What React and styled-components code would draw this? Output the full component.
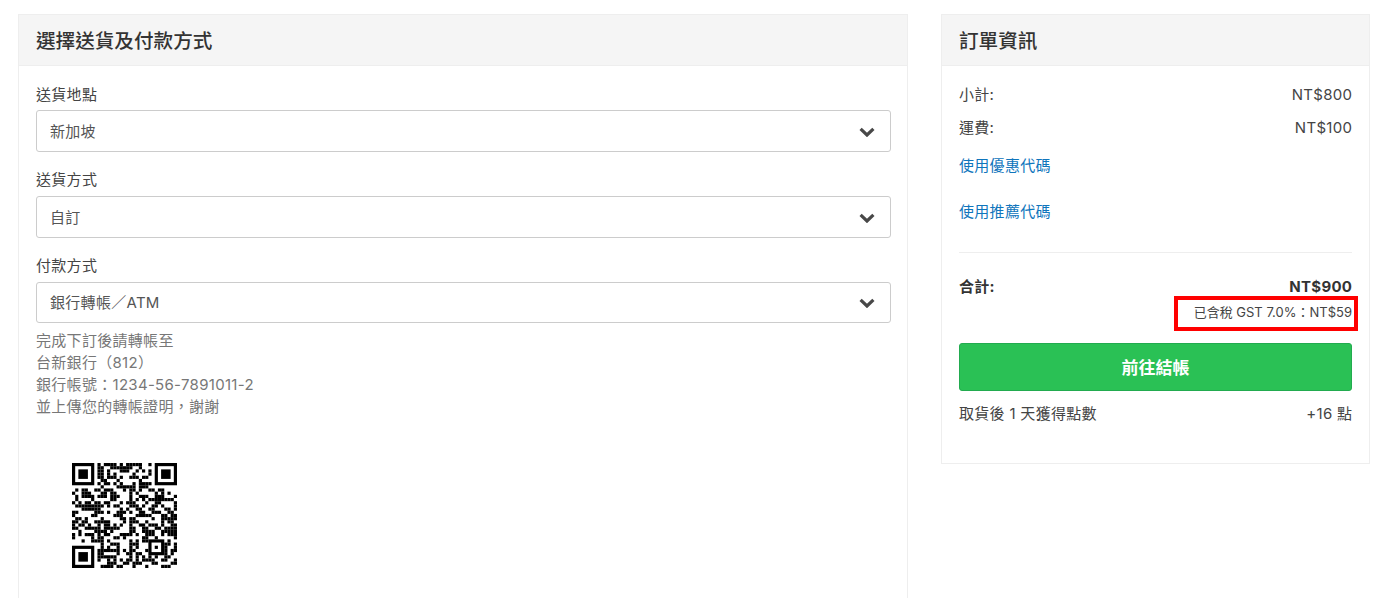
import styled, { createGlobalStyle } from "styled-components";

const GlobalStyle = createGlobalStyle`
  html, body {
    margin: 0;
    background: #fff;
    overflow: hidden;
  }
  body {
    font-family: Inter, "Noto Sans CJK TC", sans-serif;
    color: #333;
  }
`;

// quick module map for the transfer qr code
const qrSize = 33;
const qrCells = () => {
  const cells = [];
  let seed = 20231;
  for (let y = 0; y < qrSize; y++) {
    for (let x = 0; x < qrSize; x++) {
      seed = (seed * 16807) % 2147483647;
      const nearFinder =
        (x < 8 && y < 8) || (x >= qrSize - 8 && y < 8) || (x < 8 && y >= qrSize - 8);
      const inAlign = x >= 24 && x < 29 && y >= 24 && y < 29;
      if (!nearFinder && !inAlign && seed % 100 < 52) cells.push([x, y]);
    }
  }
  return cells;
};

const Finder = ({ x, y }) => (
  <>
    <rect x={x} y={y} width="7" height="7" fill="#000" />
    <rect x={x + 1} y={y + 1} width="5" height="5" fill="#fff" />
    <rect x={x + 2} y={y + 2} width="3" height="3" fill="#000" />
  </>
);

const Chevron = () => (
  <svg viewBox="0 0 16 10" width="16" height="10" fill="none">
    <path d="M1.6 1.8 L8 8 L14.4 1.8" stroke="#484848" strokeWidth="3.2" />
  </svg>
);

const App = () => {
  return (
    <>
      <GlobalStyle />
      <Page>
        <MainCard>
          <CardHeader>選擇送貨及付款方式</CardHeader>
          <MainBody>
            <Field>
              <Label>送貨地點</Label>
              <SelectBox>新加坡<Chevron /></SelectBox>
            </Field>
            <Field>
              <Label>送貨方式</Label>
              <SelectBox>自訂<Chevron /></SelectBox>
            </Field>
            <Field>
              <Label>付款方式</Label>
              <SelectBox $height={41}>銀行轉帳／ATM<Chevron /></SelectBox>
            </Field>
            <HelpText>
              完成下訂後請轉帳至<br />
              台新銀行（812）<br />
              銀行帳號：1234-56-7891011-2<br />
              並上傳您的轉帳證明，謝謝
            </HelpText>
            <QrCode viewBox={`0 0 ${qrSize} ${qrSize}`}>
              <Finder x={0} y={0} />
              <Finder x={qrSize - 7} y={0} />
              <Finder x={0} y={qrSize - 7} />
              <rect x="24" y="24" width="5" height="5" fill="#000" />
              <rect x="25" y="25" width="3" height="3" fill="#fff" />
              <rect x="26" y="26" width="1" height="1" fill="#000" />
              {qrCells().map(([x, y]) => (
                <rect key={`${x}-${y}`} x={x} y={y} width="1" height="1" fill="#000" />
              ))}
            </QrCode>
          </MainBody>
        </MainCard>
        <SideCard>
          <CardHeader>訂單資訊</CardHeader>
          <SideBody>
            <Row><span>小計:</span><span>NT$800</span></Row>
            <Row><span>運費:</span><span>NT$100</span></Row>
            <CouponLink>使用優惠代碼</CouponLink>
            <CouponLink>使用推薦代碼</CouponLink>
            <Divider />
            <TotalRow><span>合計:</span><span>NT$900</span></TotalRow>
            <TaxLine><TaxNote>已含稅 GST 7.0%：NT$59</TaxNote></TaxLine>
            <CheckoutButton>前往結帳</CheckoutButton>
            <PointsRow><span>取貨後 1 天獲得點數</span><span>+16 點</span></PointsRow>
          </SideBody>
        </SideCard>
      </Page>
    </>
  );
};

export default App;

const Page = styled.div`
  display: flex;
  align-items: flex-start;
  gap: 33px;
  padding: 14px 18px 0;
  height: 598px;
  box-sizing: border-box;
  overflow: hidden;
`;

const Card = styled.section`
  border: 1px solid #eee;
  box-sizing: border-box;
  background: #fff;
`;

const MainCard = styled(Card)`
  width: 890px;
  flex: none;
  height: 700px;
`;

const SideCard = styled(Card)`
  width: 429px;
  flex: none;
  height: 450px;
`;

const CardHeader = styled.h2`
  margin: 0;
  height: 51px;
  padding: 0 17px 2px;
  display: flex;
  align-items: center;
  box-sizing: border-box;
  background: #f5f5f5;
  border-bottom: 1px solid #eee;
  font-size: 19.6px;
  font-weight: 500;
  color: #333;
`;

const MainBody = styled.div`
  padding: 15px 16px 0 17px;
`;

const Label = styled.div`
  font-size: 15px;
  line-height: 28px;
  margin-bottom: 1px;
  letter-spacing: 0.3px;
  color: #444;
`;

const Field = styled.div`
  margin-bottom: 15px;
  & + & ${Label} {
    margin-top: -1px;
    margin-bottom: 2px;
  }
  &:nth-of-type(3) {
    margin-bottom: 7px;
  }
`;

const SelectBox = styled.div`
  height: ${(p) => p.$height || 42}px;
  box-sizing: border-box;
  display: flex;
  align-items: center;
  justify-content: space-between;
  padding: 0 15px 2px 13px;
  border: 1px solid #ccc;
  border-radius: 3px;
  font-size: 15px;
  letter-spacing: 0.3px;
  color: #555;
  svg {
    margin-top: 3px;
  }
`;

const HelpText = styled.p`
  margin: 0;
  font-size: 15px;
  line-height: 22px;
  letter-spacing: 0.3px;
  color: #777;
`;

const QrCode = styled.svg`
  display: block;
  width: 105px;
  height: 105px;
  margin: 45px 0 0 36px;
`;

const SideBody = styled.div`
  padding: 12px 17px 0;
`;

const Row = styled.div`
  display: flex;
  justify-content: space-between;
  margin-right: -0.3px;
  font-size: 15px;
  line-height: 33px;
  letter-spacing: 0.3px;
  color: #444;
`;

const CouponLink = styled.a`
  display: block;
  font-size: 15px;
  line-height: 46px;
  letter-spacing: 0.3px;
  color: #0f75bc;
  cursor: pointer;
  &:first-of-type {
    margin-top: -1px;
  }
`;

const Divider = styled.hr`
  margin: 17px 0 21px;
  border: 0;
  border-top: 1px solid #eee;
`;

const TotalRow = styled(Row)`
  font-weight: 700;
  line-height: 26px;
  color: #333;
`;

const TaxLine = styled.div`
  display: flex;
  justify-content: flex-end;
  margin-bottom: 19px;
`;

const TaxNote = styled.span`
  position: relative;
  font-size: 13px;
  line-height: 24px;
  color: #444;
  &::after {
    content: "";
    position: absolute;
    top: -4px;
    bottom: -7px;
    left: -20px;
    right: -6px;
    border: 4px solid #f00;
    box-sizing: border-box;
  }
`;

const CheckoutButton = styled.button`
  display: block;
  width: 100%;
  height: 48px;
  padding: 0 0 2px;
  border: 1px solid #22ab4f;
  border-radius: 3px;
  background: #2ac155;
  color: #fff;
  font-family: inherit;
  font-size: 17px;
  font-weight: 700;
  cursor: pointer;
`;

const PointsRow = styled(Row)`
  margin-top: 6px;
  line-height: 33px;
`;
